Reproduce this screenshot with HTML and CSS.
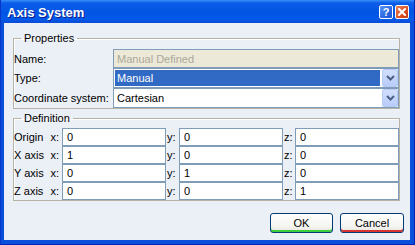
FILE: index.html
```html
<!DOCTYPE html>
<html>
<head>
    <title>Axis System</title>
    <link rel="stylesheet" href="styles.css">
</head>
<body>

    <div class="window">
        <div class="titlebar">
            <span class="title">Axis System</span>
            <div class="caption-buttons">
                <span class="cap-btn help">?</span>
                <span class="cap-btn close">
                    <svg width="8" height="8" viewBox="0 0 8 8"><path d="M1 1 L7 7 M7 1 L1 7" stroke="#fff" stroke-width="2" stroke-linecap="square"/></svg>
                </span>
            </div>
        </div>

        <div class="client">
            <fieldset class="group">
                <legend>Properties</legend>
                <div class="props-grid">
                    <label>Name:</label>
                    <div class="field disabled">Manual Defined</div>

                    <label>Type:</label>
                    <div class="combo">
                        <span class="combo-value selected">Manual</span>
                        <span class="combo-btn">
                            <svg width="9" height="6" viewBox="0 0 9 6"><path d="M1 1 L4.5 4.5 L8 1" fill="none" stroke="#4D6185" stroke-width="2"/></svg>
                        </span>
                    </div>

                    <label>Coordinate system:</label>
                    <div class="combo">
                        <span class="combo-value">Cartesian</span>
                        <span class="combo-btn">
                            <svg width="9" height="6" viewBox="0 0 9 6"><path d="M1 1 L4.5 4.5 L8 1" fill="none" stroke="#4D6185" stroke-width="2"/></svg>
                        </span>
                    </div>
                </div>
            </fieldset>

            <fieldset class="group definition">
                <legend>Definition</legend>
                <div class="def-grid">
                    <span class="row-label"><span>Origin</span><span>x:</span></span>
                    <div class="field num">0</div>
                    <span class="axis-label">y:</span>
                    <div class="field num">0</div>
                    <span class="axis-label">z:</span>
                    <div class="field num">0</div>

                    <span class="row-label"><span>X axis</span><span>x:</span></span>
                    <div class="field num">1</div>
                    <span class="axis-label">y:</span>
                    <div class="field num">0</div>
                    <span class="axis-label">z:</span>
                    <div class="field num">0</div>

                    <span class="row-label"><span>Y axis</span><span>x:</span></span>
                    <div class="field num">0</div>
                    <span class="axis-label">y:</span>
                    <div class="field num">1</div>
                    <span class="axis-label">z:</span>
                    <div class="field num">0</div>

                    <span class="row-label"><span>Z axis</span><span>x:</span></span>
                    <div class="field num">0</div>
                    <span class="axis-label">y:</span>
                    <div class="field num">0</div>
                    <span class="axis-label">z:</span>
                    <div class="field num">1</div>
                </div>
            </fieldset>

            <div class="actions">
                <button class="btn ok">OK</button>
                <button class="btn cancel">Cancel</button>
            </div>
        </div>
    </div>

</body>
</html>
```

FILE: styles.css
```css
body {
    margin: 0;
    font-family: 'Liberation Sans', Arial, sans-serif;
    font-size: 11px;
    color: #000;
}

.window {
    width: 415px;
    height: 245px;
    display: flex;
    flex-direction: column;
    background: #0A4FDC;
    box-sizing: border-box;
    border-left: 1px solid #0836C8;
    border-right: 1px solid #0026B8;
    border-bottom: 1px solid #0026B8;
}

.titlebar {
    height: 23px;
    flex: none;
    display: flex;
    align-items: center;
    justify-content: space-between;
    padding: 0 5px 0 6px;
    background: linear-gradient(to bottom, #3C8EF8 0px, #0B5DE8 3px, #0254E3 12px, #0459E9 19px, #0A4CD6 23px);
}

.title {
    color: #fff;
    font-family: 'Liberation Sans Narrow', 'Liberation Sans', sans-serif;
    font-weight: bold;
    font-size: 13px;
    text-shadow: 1px 1px 0 #0B1E8C;
    padding-top: 2px;
}

.caption-buttons {
    display: flex;
    gap: 2px;
    padding-top: 1px;
}

.cap-btn {
    width: 12px;
    height: 12px;
    border: 1px solid #fff;
    border-radius: 2px;
    display: flex;
    align-items: center;
    justify-content: center;
    color: #fff;
    font-weight: bold;
    font-size: 11px;
}

.help {
    background: linear-gradient(135deg, #5A98F6, #2A66E2 60%, #1D55D4);
}

.close {
    background: linear-gradient(135deg, #E8825E, #DC4F22 60%, #C63B12);
}

.client {
    flex: 1;
    margin: 0 4px 4px 3px;
    background: #EBEFF6;
    padding: 9px 10px 0 9px;
    box-sizing: border-box;
}

.group {
    margin: 0;
    padding: 4px 0 0 0;
    border: 1px solid #B6B3A6;
    box-shadow: inset 1px 1px 0 #fff;
    min-width: 0;
}

.group legend {
    margin-left: 7px;
    padding: 0 3px;
    line-height: 13px;
}

.props-grid {
    display: grid;
    grid-template-columns: 99px 1fr;
    grid-template-rows: 19px 20px 20px;
}

.props-grid label {
    display: flex;
    align-items: center;
    white-space: nowrap;
}

.field {
    box-sizing: border-box;
    border: 1px solid #7F9DB9;
    background: #fff;
    display: flex;
    align-items: center;
    padding-left: 3px;
}

.field.disabled {
    background: #ECE9D8;
    color: #ACA899;
}

.combo {
    box-sizing: border-box;
    border: 1px solid #7F9DB9;
    background: #fff;
    display: flex;
}

.combo-value {
    flex: 1;
    margin: 1px 2px 1px 1px;
    padding-left: 2px;
    display: flex;
    align-items: center;
}

.combo-value.selected {
    background: #316AC5;
    color: #fff;
}

.combo-btn {
    width: 16px;
    box-sizing: border-box;
    border: 1px solid #B6CAF5;
    border-radius: 2px;
    background: linear-gradient(to bottom, #D2E0FD, #B8CCF9);
    display: flex;
    align-items: center;
    justify-content: center;
}

.definition {
    margin-top: 3px;
    padding-top: 3px;
}

.def-grid {
    display: grid;
    grid-template-columns: 48px 104px 13px 104px 12px 104px;
    grid-auto-rows: 18px;
}

.row-label {
    display: flex;
    align-items: center;
    justify-content: space-between;
    padding-right: 3px;
}

.axis-label {
    display: flex;
    align-items: center;
    padding-left: 1px;
}

.field.num {
    padding-left: 4px;
}

.actions {
    display: flex;
    justify-content: flex-end;
    gap: 7px;
    margin-top: 12px;
    margin-right: -4px;
}

.btn {
    height: 20px;
    padding: 0;
    border: 1px solid #003C74;
    border-radius: 3px;
    font-family: 'Liberation Sans', Arial, sans-serif;
    font-size: 11px;
    color: #000;
    background: linear-gradient(to bottom, #FFFFFF, #F4F4F0 70%, #E6E5DE);
}

.btn.ok {
    width: 63px;
    box-shadow: inset 0 -2px 0 #3DCE3D;
}

.btn.cancel {
    width: 64px;
    box-shadow: inset 0 -2px 0 #D9342F;
}
```
